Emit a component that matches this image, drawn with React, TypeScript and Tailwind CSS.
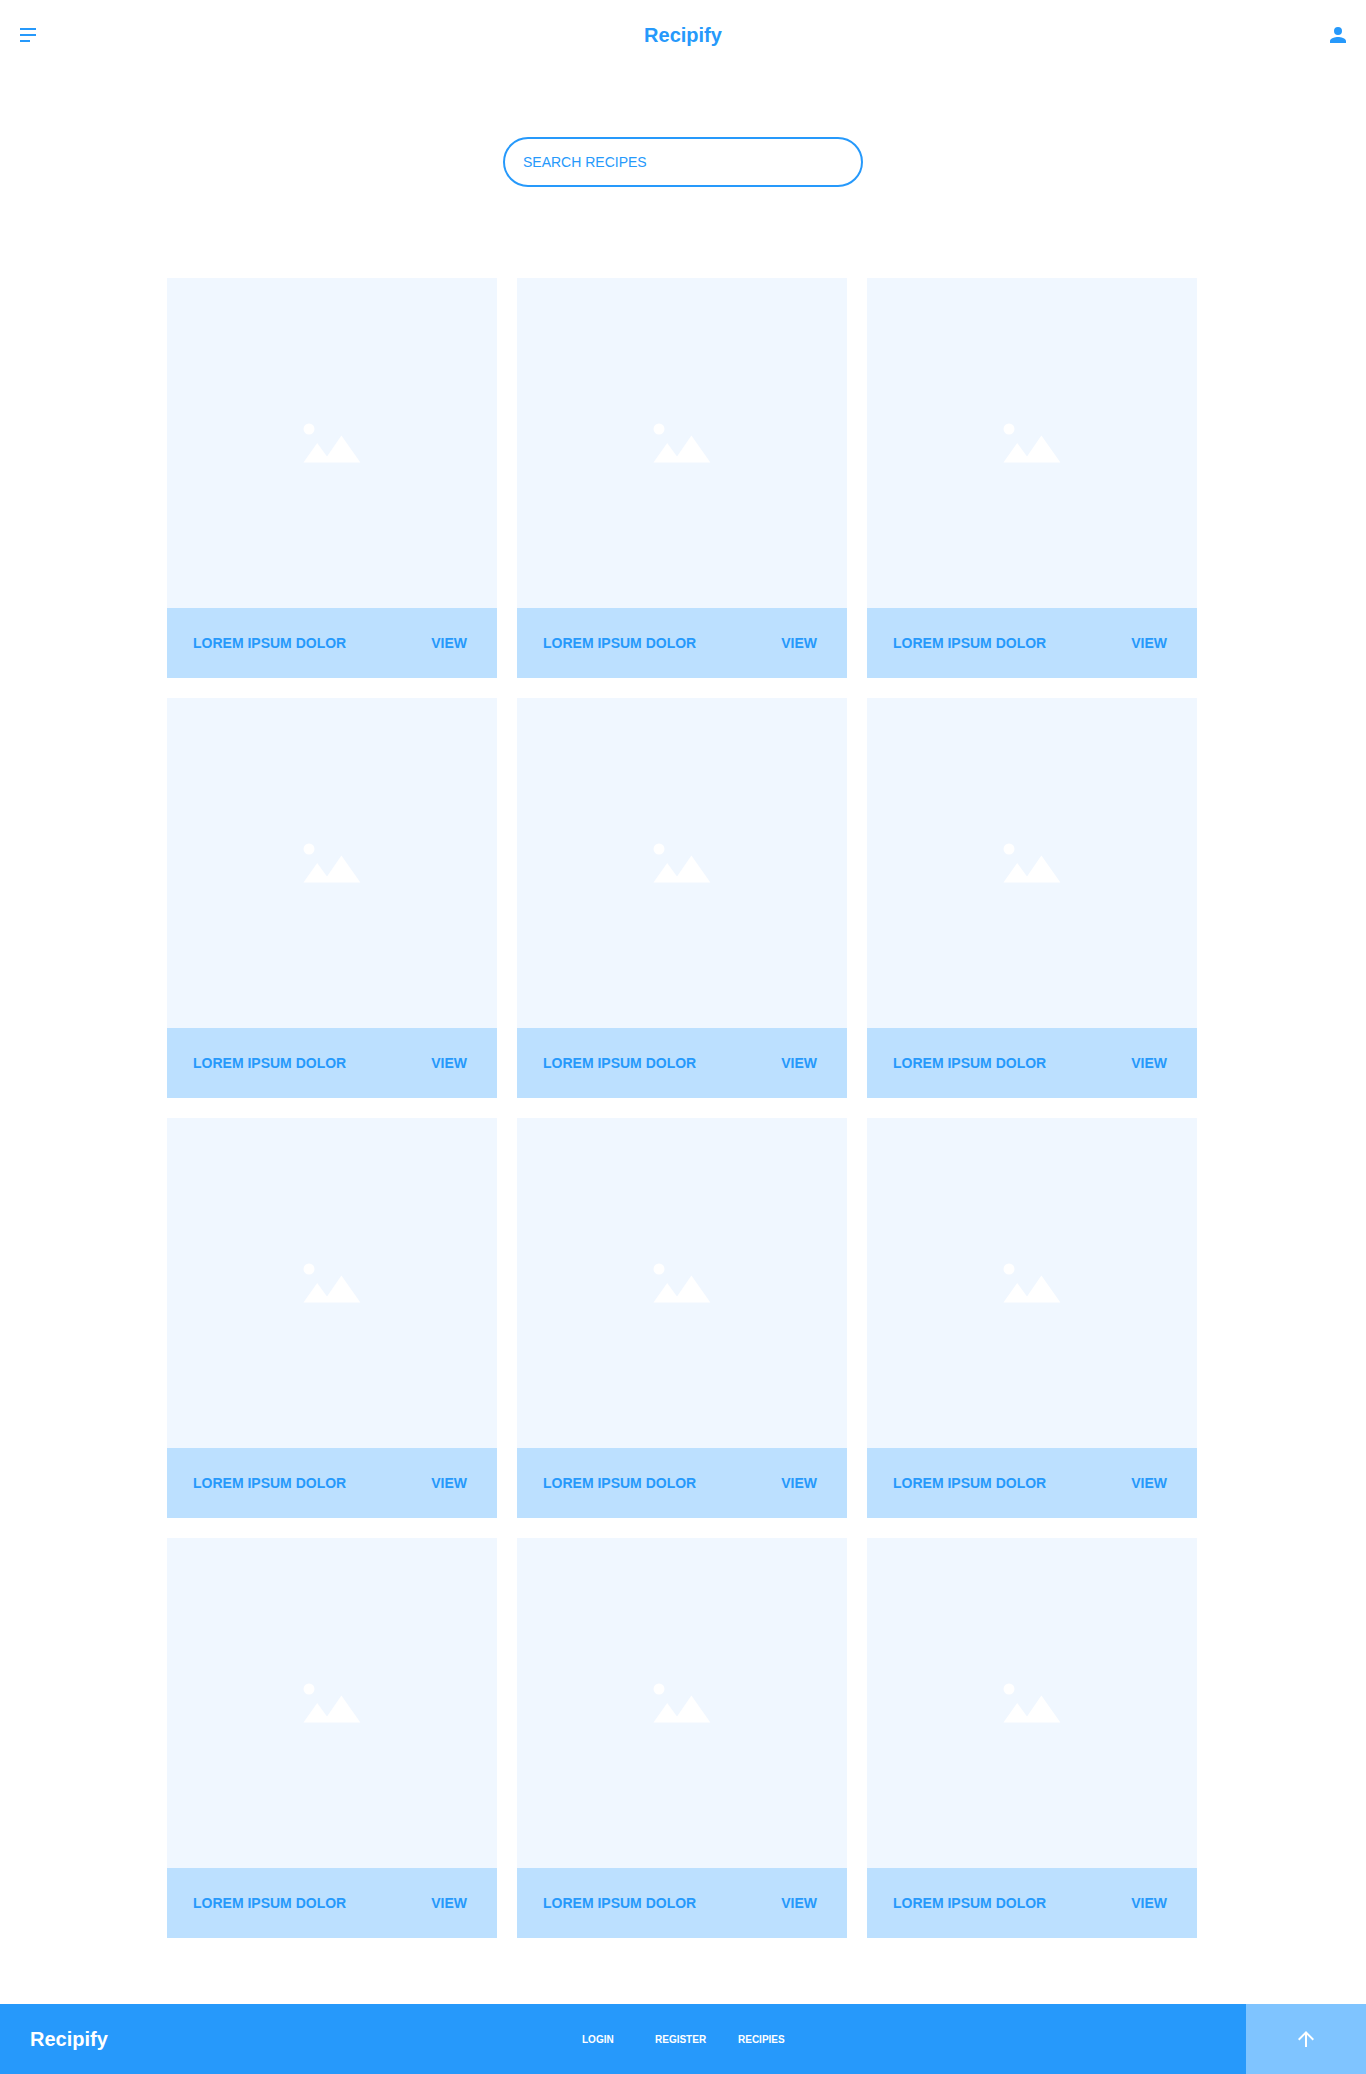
const recipes = Array.from({ length: 12 }, (_, id) => ({ id, title: "LOREM IPSUM DOLOR" }));

function MenuIcon() {
  return (
    <svg width="16" height="14" viewBox="0 0 16 14" fill="currentColor">
      <path d="M0 0h16v2H0zM0 6h16v2H0zM0 12h10v2H0z" />
    </svg>
  );
}

function PersonIcon() {
  return (
    <svg width="16" height="16" viewBox="0 0 16 16" fill="currentColor">
      <path d="M8 8a4 4 0 1 0 0-8 4 4 0 0 0 0 8zm0 2c-2.67 0-8 1.34-8 4v2h16v-2c0-2.66-5.33-4-8-4z" />
    </svg>
  );
}

function ArrowUpIcon() {
  return (
    <svg width="16" height="16" viewBox="0 0 16 16" fill="currentColor">
      <path d="M0 8l1.4 1.4L7 3.8V16h2V3.8l5.6 5.6L16 8 8 0z" />
    </svg>
  );
}

function PictureIcon() {
  return (
    <svg width="58" height="40" viewBox="-1 0 58 40" fill="#fff">
      <circle cx="5" cy="6" r="5.5" />
      <path d="M-0.6 39.5L13.2 20l9.8 13.6L37.4 12.6 56.4 39.5z" />
    </svg>
  );
}

function RecipeCard({ title }: { title: string }) {
  return (
    <article className="w-[330px]">
      <div className="flex h-[330px] items-center justify-center bg-[#f0f7ff]">
        <PictureIcon />
      </div>
      <div className="flex h-[70px] items-center justify-between bg-[#bce0ff] pr-[30px] pl-[26px] text-sm font-bold">
        <h2>{title}</h2>
        <a href="#">VIEW</a>
      </div>
    </article>
  );
}

export default function App() {
  return (
    <div className="min-h-[2074px] bg-white font-['Liberation_Sans',Arial,sans-serif] text-[#2699fb]">
      <header className="flex h-[70px] items-center justify-between px-5">
        <button aria-label="Menu">
          <MenuIcon />
        </button>
        <h1 className="text-xl font-bold">Recipify</h1>
        <button aria-label="Account">
          <PersonIcon />
        </button>
      </header>

      <main className="flex flex-col items-center pt-[67px]">
        <input
          className="h-[50px] w-[360px] rounded-full border-2 border-[#2699fb] px-[18px] text-sm outline-none placeholder:text-[#2699fb]"
          placeholder="SEARCH RECIPES"
        />
        <section className="mt-[91px] mr-[2px] grid grid-cols-3 gap-5">
          {recipes.map((recipe) => (
            <RecipeCard key={recipe.id} title={recipe.title} />
          ))}
        </section>
      </main>

      <footer className="mt-[66px] flex h-[70px] items-center bg-[#2699fb] text-white">
        <div className="w-[582px] pl-[30px] text-xl font-bold">Recipify</div>
        <nav className="flex flex-1 text-[10px] font-bold">
          <a href="#" className="w-[73px]">LOGIN</a>
          <a href="#" className="w-[83px]">REGISTER</a>
          <a href="#">RECIPIES</a>
        </nav>
        <button aria-label="Back to top" className="flex h-full w-[120px] items-center justify-center bg-[#7fc4ff]">
          <ArrowUpIcon />
        </button>
      </footer>
    </div>
  );
}
